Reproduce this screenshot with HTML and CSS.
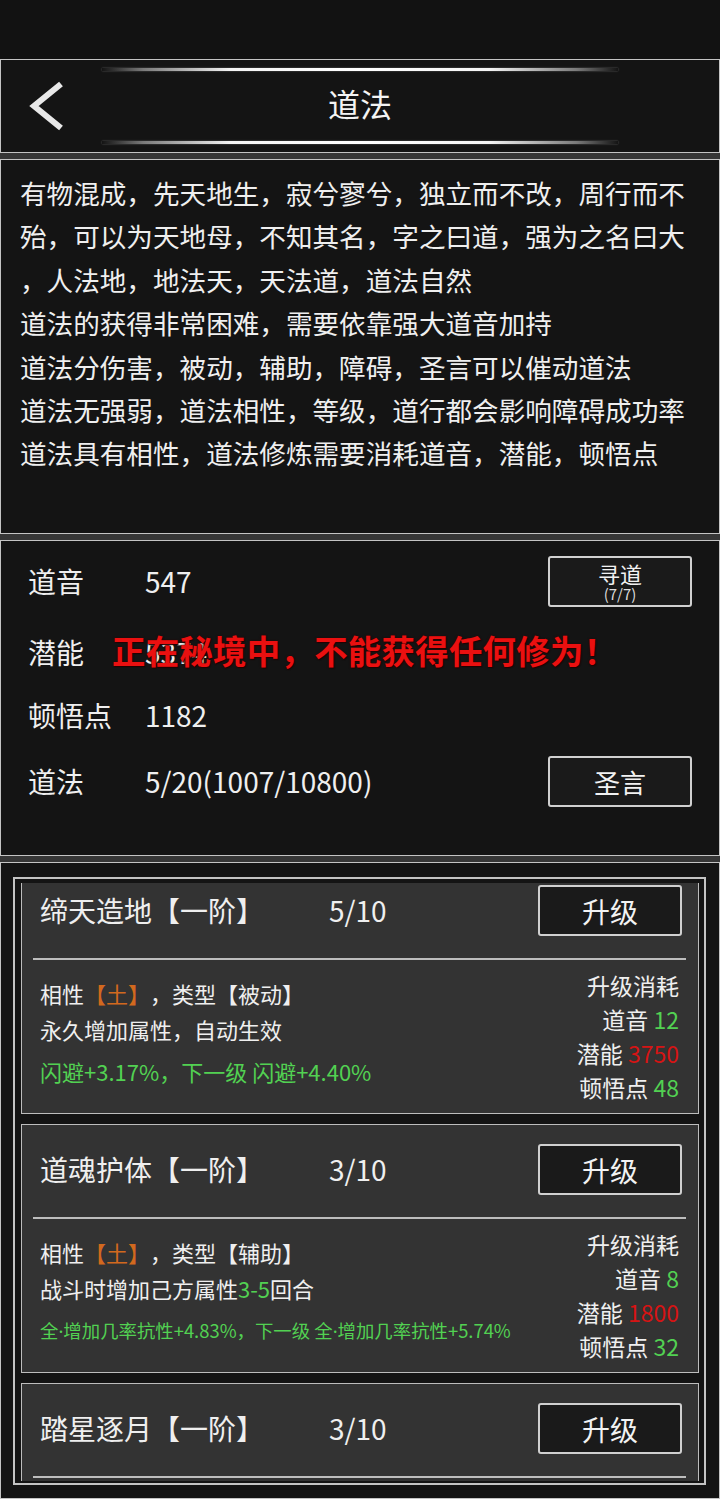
FILE: index.html
```html
<!DOCTYPE html>
<html lang="zh-CN">
<head>
    <meta charset="UTF-8">
    <meta name="viewport" content="width=device-width, initial-scale=1.0">
    <title>道法</title>
    <link rel="stylesheet" href="styles.css">
</head>
<body>
    <div class="statusbar"></div>

    <div class="screen">
        <header class="panel topbar">
            <div class="glow-line"></div>
            <div class="topbar-row">
                <a href="#" class="back">
                    <svg width="36" height="52" viewBox="0 0 36 52">
                        <polyline points="33,4 6,26 33,48" fill="none" stroke="#e8e8e8" stroke-width="6"/>
                    </svg>
                </a>
                <h1 class="title">道法</h1>
                <span></span>
            </div>
            <div class="glow-line"></div>
        </header>

        <section class="panel intro">
            <p>
                有物混成，先天地生，寂兮寥兮，独立而不改，周行而不<br>
                殆，可以为天地母，不知其名，字之曰道，强为之名曰大<br>
                ，人法地，地法天，天法道，道法自然<br>
                道法的获得非常困难，需要依靠强大道音加持<br>
                道法分伤害，被动，辅助，障碍，圣言可以催动道法<br>
                道法无强弱，道法相性，等级，道行都会影响障碍成功率<br>
                道法具有相性，道法修炼需要消耗道音，潜能，顿悟点
            </p>
        </section>

        <section class="panel stats">
            <div class="stat-row">
                <span class="stat-label">道音</span>
                <span class="stat-value">547</span>
                <a href="#" class="btn btn-seek">
                    <span>寻道</span>
                    <span class="btn-sub">(7/7)</span>
                </a>
            </div>
            <div class="stat-row">
                <span class="stat-label">潜能</span>
                <span class="stat-value">5374</span>
            </div>
            <div class="stat-row">
                <span class="stat-label">顿悟点</span>
                <span class="stat-value">1182</span>
            </div>
            <div class="stat-row">
                <span class="stat-label">道法</span>
                <span class="stat-value">5/20(1007/10800)</span>
                <a href="#" class="btn">圣言</a>
            </div>

            <div class="warning">正在秘境中，不能获得任何修为！</div>
        </section>

        <section class="panel skills">
            <div class="skill-frame">
                <div class="skill-viewport">
                    <div class="skill-list">
                        <div class="skill-card">
                            <div class="skill-head">
                                <span class="skill-name">缔天造地【一阶】</span>
                                <span class="skill-level">5/10</span>
                                <a href="#" class="btn">升级</a>
                            </div>
                            <div class="skill-divider"></div>
                            <div class="skill-body">
                                <div class="skill-info">
                                    <div>相性<span class="earth">【土】</span>，类型【被动】</div>
                                    <div>永久增加属性，自动生效</div>
                                    <div class="effect">闪避+3.17%，下一级 闪避+4.40%</div>
                                </div>
                                <div class="skill-cost">
                                    <div>升级消耗</div>
                                    <div>道音 <span class="ok">12</span></div>
                                    <div>潜能 <span class="lack">3750</span></div>
                                    <div>顿悟点 <span class="ok">48</span></div>
                                </div>
                            </div>
                        </div>

                        <div class="skill-card">
                            <div class="skill-head">
                                <span class="skill-name">道魂护体【一阶】</span>
                                <span class="skill-level">3/10</span>
                                <a href="#" class="btn">升级</a>
                            </div>
                            <div class="skill-divider"></div>
                            <div class="skill-body">
                                <div class="skill-info">
                                    <div>相性<span class="earth">【土】</span>，类型【辅助】</div>
                                    <div>战斗时增加己方属性<span class="ok">3-5</span>回合</div>
                                    <div class="effect small">全<span class="dot">·</span>增加几率抗性+4.83%，下一级 全<span class="dot">·</span>增加几率抗性+5.74%</div>
                                </div>
                                <div class="skill-cost">
                                    <div>升级消耗</div>
                                    <div>道音 <span class="ok">8</span></div>
                                    <div>潜能 <span class="lack">1800</span></div>
                                    <div>顿悟点 <span class="ok">32</span></div>
                                </div>
                            </div>
                        </div>

                        <div class="skill-card">
                            <div class="skill-head">
                                <span class="skill-name">踏星逐月【一阶】</span>
                                <span class="skill-level">3/10</span>
                                <a href="#" class="btn">升级</a>
                            </div>
                            <div class="skill-divider"></div>
                        </div>
                    </div>
                </div>
            </div>
        </section>
    </div>
</body>
</html>
```

FILE: styles.css
```css
:root {
    --page-bg: #121212;
    --panel-bg: #141414;
    --card-bg: #333333;
    --band: #363636;
    --line: #c4c4c4;
    --text: #efefef;
    --green: #52d152;
    --red: #d61414;
    --orange: #d2691e;
}

* {
    margin: 0;
    padding: 0;
    box-sizing: border-box;
}

body {
    width: 720px;
    height: 1499px;
    overflow: hidden;
    background-color: var(--page-bg);
    color: var(--text);
    font-family: "Noto Sans CJK SC", "Noto Sans", sans-serif;
    text-spacing-trim: space-all;
}

a {
    color: inherit;
    text-decoration: none;
}

.statusbar {
    height: 59px;
    background-color: var(--page-bg);
}

.screen {
    display: flex;
    flex-direction: column;
    gap: 6px;
    background-color: var(--band);
}

.panel {
    border: 1px solid var(--line);
    background-color: var(--panel-bg);
}

/* top bar */

.topbar {
    height: 94px;
    padding: 8px 0;
}

.glow-line {
    width: 516px;
    height: 3px;
    margin: 0 auto 0 101px;
    background: linear-gradient(90deg, rgba(255,255,255,0), #7a7a7a 8%, #f4f4f4 25%, #ffffff 50%, #f4f4f4 75%, #7a7a7a 92%, rgba(255,255,255,0));
    box-shadow: 0 0 2px rgba(255, 255, 255, 0.35);
}

.topbar-row {
    height: 70px;
    display: grid;
    grid-template-columns: 1fr auto 1fr;
    align-items: center;
}

.back {
    display: block;
    width: 36px;
    height: 52px;
    margin-left: 27px;
}

.title {
    font-size: 32px;
    font-weight: normal;
    line-height: 1;
    padding-bottom: 7px;
    color: #f4f4f4;
}

/* intro text */

.intro {
    height: 375px;
    padding: 11px 19px;
}

.intro p {
    font-size: 26.6px;
    line-height: 43.4px;
    white-space: nowrap;
}

/* stats */

.stats {
    position: relative;
    height: 316px;
    padding: 14px 27px 0 27px;
    display: flex;
    flex-direction: column;
}

.stat-row {
    height: 52px;
    display: flex;
    align-items: center;
    font-size: 28px;
}

.stat-row:nth-child(2) {
    margin-top: 19px;
}

.stat-row:nth-child(3) {
    margin-top: 11px;
}

.stat-row:nth-child(4) {
    margin-top: 14px;
}

.stat-label {
    width: 117px;
}

.btn {
    margin-left: auto;
    width: 144px;
    height: 51px;
    display: flex;
    flex-direction: column;
    align-items: center;
    justify-content: center;
    border: 2px solid #d0d0d0;
    border-radius: 3px;
    background-color: #1a1a1a;
    color: #f2f2f2;
    font-size: 26px;
}

.btn-seek {
    font-size: 22px;
    line-height: 24px;
}

.btn-sub {
    font-size: 15px;
    line-height: 17px;
    color: #dddddd;
}

.warning {
    position: absolute;
    left: 111px;
    top: 89px;
    line-height: 40px;
    font-size: 33.4px;
    font-weight: bold;
    letter-spacing: 0.3px;
    color: #ea1010;
    text-shadow: 0 0 2px #300000, 1px 1px 1px #200000;
    white-space: nowrap;
}

/* skill list */

.skills {
    height: 637px;
    padding: 14px 13px 0 12px;
}

.skill-frame {
    height: 608px;
    border: 2px solid var(--line);
    padding: 4px 5px 2px 6px;
}

.skill-viewport {
    height: 100%;
    overflow: hidden;
}

.skill-list {
    margin-top: -18px;
    display: flex;
    flex-direction: column;
    gap: 10px;
}

.skill-card {
    height: 249px;
    flex-shrink: 0;
    border: 1px solid #bdbdbd;
    background-color: var(--card-bg);
}

.skill-head {
    height: 92px;
    display: flex;
    align-items: center;
    padding: 0 16px 3px 18px;
    font-size: 28px;
}

.skill-name,
.skill-level {
    padding-bottom: 2px;
}

.skill-level {
    margin-left: 65px;
}

.skill-head .btn {
    font-size: 28px;
}

.skill-divider {
    height: 2px;
    margin: 0 12px 0 11px;
    background-color: #bdbdbd;
}

.skill-body {
    display: flex;
    justify-content: space-between;
    padding: 0 19px 0 18px;
}

.skill-info {
    padding-top: 15px;
    font-size: 22px;
    line-height: 36px;
}

.effect {
    margin-top: 6px;
    color: var(--green);
}

.effect.small {
    font-size: 18.4px;
}

.dot {
    font-family: "Noto Sans", sans-serif;
}

.skill-cost {
    padding-top: 8px;
    text-align: right;
    font-size: 23px;
    line-height: 34px;
}

.earth {
    color: var(--orange);
}

.ok {
    color: var(--green);
}

.lack {
    color: var(--red);
}
```
